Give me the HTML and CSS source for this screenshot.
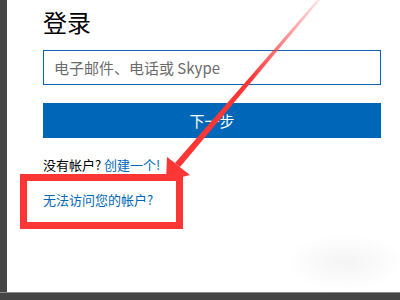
FILE: index.html
```html
<!DOCTYPE html>
<html lang="zh-CN">
<head>
<meta charset="utf-8">
<title>登录</title>
<link rel="stylesheet" href="styles.css">
</head>
<body>
<div class="frame">
  <div class="screen">
    <div class="content">
      <h1 class="title">登录</h1>
      <div class="field">电子邮件、电话或 Skype</div>
      <div class="btn">下一步</div>
      <p class="noacct">没有帐户? <span class="link">创建一个!</span></p>
      <div class="highlight">
        <span class="link">无法访问您的帐户?</span>
      </div>
    </div>
    <svg class="arrow" width="400" height="300" viewBox="0 0 400 300">
      <defs>
        <linearGradient id="fade" x1="318" y1="0" x2="250" y2="80" gradientUnits="userSpaceOnUse">
          <stop offset="0" stop-color="#ff3a3a" stop-opacity="0.15"/>
          <stop offset="1" stop-color="#fc3535" stop-opacity="1"/>
        </linearGradient>
      </defs>
      <polygon points="317,0 320,0 180,167 175,163" fill="url(#fade)"/>
      <polygon points="166,181 167,157 175,163 181,168 190,175" fill="#fc3535"/>
    </svg>
  </div>
  <div class="bottom"></div>
</div>
</body>
</html>
```
FILE: styles.css
```css
html, body {
  margin: 0;
  padding: 0;
}
body {
  background: #454545;
  width: 400px;
  height: 300px;
  overflow: hidden;
  font-family: "Noto Sans CJK SC", "Noto Sans", sans-serif;
}
.frame {
  display: flex;
  flex-direction: column;
  height: 300px;
}
.screen {
  position: relative;
  margin-left: 7px;
  height: 292px;
  background: radial-gradient(ellipse 60px 28px at 338px 262px, #f4f4f4, rgba(255,255,255,0)) , #ffffff;
}
.bottom {
  height: 8px;
  border-top: 1px solid #8a8a8a;
  background: #454545;
  box-sizing: border-box;
}
.content {
  display: flex;
  flex-direction: column;
  padding-left: 36px;
  width: 338px;
}
.title {
  margin: 9px 0 0 0;
  font-size: 24px;
  line-height: 26px;
  font-weight: normal;
  color: #000;
}
.field {
  margin-top: 15px;
  height: 35px;
  box-sizing: border-box;
  border: 1px solid #0f63b3;
  padding-left: 10px;
  display: flex;
  align-items: center;
  font-size: 15px;
  color: #6b6b6b;
}
.btn {
  margin-top: 18px;
  height: 35px;
  background: #0067b8;
  color: #fff;
  font-size: 15px;
  display: flex;
  align-items: center;
  justify-content: center;
}
.noacct {
  margin: 18px 0 0 0;
  font-size: 13px;
  line-height: 18px;
  color: #000;
}
.link {
  color: #0067b8;
}
.highlight {
  margin-left: -23px;
  width: 163px;
  height: 55px;
  box-sizing: border-box;
  border: 7px solid #fc3535;
  padding: 10px 0 0 16px;
  font-size: 13px;
  line-height: 18px;
}
.arrow {
  position: absolute;
  left: -7px;
  top: 0;
}
```
